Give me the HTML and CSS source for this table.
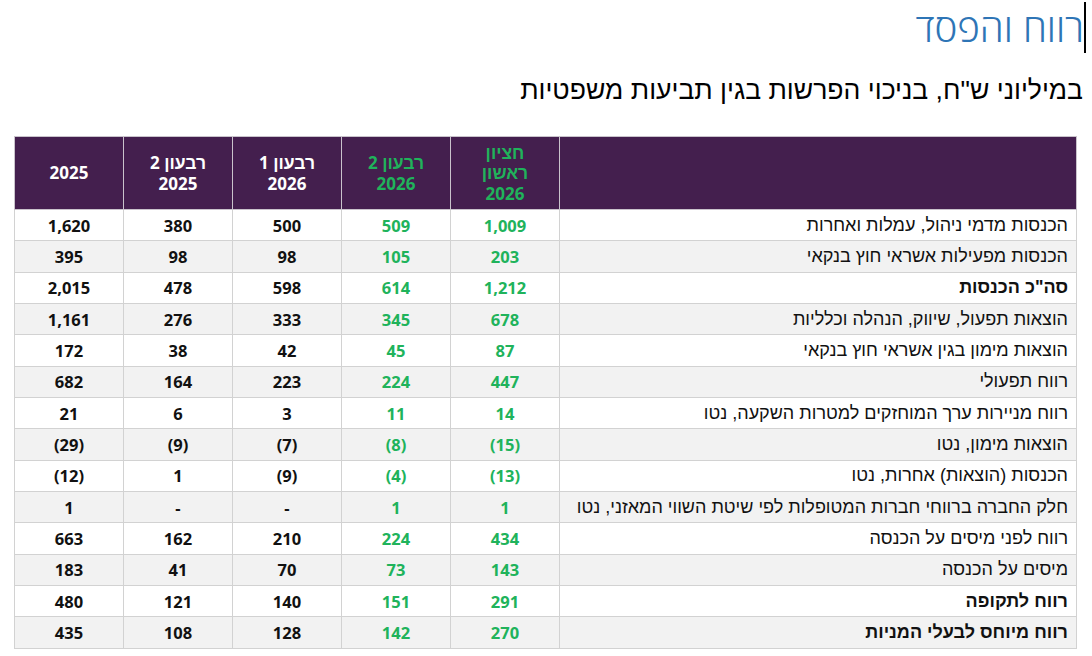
FILE: index.html
```html
<!DOCTYPE html>
<html lang="he" dir="rtl">
<head>
<meta charset="utf-8">
<title>רווח והפסד</title>
<link rel="stylesheet" href="styles.css">
</head>
<body>
<div class="page">
  <h1 class="title"><span class="caret"></span>רווח והפסד</h1>
  <p class="subtitle">במיליוני ש"ח, בניכוי הפרשות בגין תביעות משפטיות</p>
  <table class="pl">
    <thead>
      <tr>
        <th class="label-col"></th>
        <th class="green"><span class="he">חציון</span><br><span class="he">ראשון</span><br>2026</th>
        <th class="green"><span class="he">רבעון</span> 2<br>2026</th>
        <th><span class="he">רבעון</span> 1<br>2026</th>
        <th><span class="he">רבעון</span> 2<br>2025</th>
        <th>2025</th>
      </tr>
    </thead>
    <tbody>
      <tr><td class="label">הכנסות מדמי ניהול, עמלות ואחרות</td><td class="green">1,009</td><td class="green">509</td><td>500</td><td>380</td><td>1,620</td></tr>
      <tr><td class="label">הכנסות מפעילות אשראי חוץ בנקאי</td><td class="green">203</td><td class="green">105</td><td>98</td><td>98</td><td>395</td></tr>
      <tr><td class="label strong">סה"כ הכנסות</td><td class="green">1,212</td><td class="green">614</td><td>598</td><td>478</td><td>2,015</td></tr>
      <tr><td class="label">הוצאות תפעול, שיווק, הנהלה וכלליות</td><td class="green">678</td><td class="green">345</td><td>333</td><td>276</td><td>1,161</td></tr>
      <tr><td class="label">הוצאות מימון בגין אשראי חוץ בנקאי</td><td class="green">87</td><td class="green">45</td><td>42</td><td>38</td><td>172</td></tr>
      <tr><td class="label">רווח תפעולי</td><td class="green">447</td><td class="green">224</td><td>223</td><td>164</td><td>682</td></tr>
      <tr><td class="label">רווח מניירות ערך המוחזקים למטרות השקעה, נטו</td><td class="green">14</td><td class="green">11</td><td>3</td><td>6</td><td>21</td></tr>
      <tr><td class="label">הוצאות מימון, נטו</td><td class="green">(15)</td><td class="green">(8)</td><td>(7)</td><td>(9)</td><td>(29)</td></tr>
      <tr><td class="label">הכנסות (הוצאות) אחרות, נטו</td><td class="green">(13)</td><td class="green">(4)</td><td>(9)</td><td>1</td><td>(12)</td></tr>
      <tr><td class="label">חלק החברה ברווחי חברות המטופלות לפי שיטת השווי המאזני, נטו</td><td class="green">1</td><td class="green">1</td><td>-</td><td>-</td><td>1</td></tr>
      <tr><td class="label">רווח לפני מיסים על הכנסה</td><td class="green">434</td><td class="green">224</td><td>210</td><td>162</td><td>663</td></tr>
      <tr><td class="label">מיסים על הכנסה</td><td class="green">143</td><td class="green">73</td><td>70</td><td>41</td><td>183</td></tr>
      <tr><td class="label strong">רווח לתקופה</td><td class="green">291</td><td class="green">151</td><td>140</td><td>121</td><td>480</td></tr>
      <tr><td class="label strong">רווח מיוחס לבעלי המניות</td><td class="green">270</td><td class="green">142</td><td>128</td><td>108</td><td>435</td></tr>
    </tbody>
  </table>
</div>
</body>
</html>
```
FILE: styles.css
```css
html, body {
  margin: 0;
  padding: 0;
  background: #ffffff;
}

body {
  direction: rtl;
  font-family: "Liberation Sans", Arial, sans-serif;
  color: #000;
}

.page {
  padding: 2px 15px 0 14px;
}

.title {
  margin: 0 -9px 0 0;
  font-family: "Open Sans", "Liberation Sans", sans-serif;
  font-weight: 300;
  font-size: 38.5px;
  line-height: 51px;
  height: 51px;
  color: #2e75b6;
  display: flex;
  align-items: center;
}

.caret {
  display: block;
  width: 2px;
  height: 51px;
  background: #000;
}

.subtitle {
  margin: 22px -6px 0 0;
  font-size: 26.6px;
  line-height: 30px;
  color: #000;
}

.pl {
  margin-top: 31px;
  width: 1063px;
  border-collapse: collapse;
  table-layout: fixed;
  border: 1px solid #d4d4d4;
}

.pl th {
  background: #441f4e;
  color: #ffffff;
  font-family: "Open Sans", "Liberation Sans", sans-serif;
  font-weight: 700;
  font-size: 17px;
  line-height: 19.5px;
  height: 72px;
  padding: 0;
  text-align: center;
  vertical-align: middle;
  border: 1px solid #c9c3cb;
  width: 108px;
}

.pl th .he {
  font-family: "Liberation Sans", Arial, sans-serif;
  font-size: 17.5px;
}

.pl th.label-col {
  width: auto;
}

.pl th.green {
  color: #20b35b;
}

.pl td {
  height: 30.35px;
  padding: 0;
  border: 1px solid #d2d2d2;
  text-align: center;
  vertical-align: middle;
  font-family: "Open Sans", "Liberation Sans", sans-serif;
  font-weight: 700;
  font-size: 16.5px;
  color: #111;
}

.pl td.green {
  color: #20b35b;
}

.pl td.label {
  text-align: right;
  padding-right: 8px;
  font-family: "Liberation Sans", Arial, sans-serif;
  font-weight: 400;
  font-size: 18px;
  color: #111;
}

.pl td.label.strong {
  font-weight: 700;
}

.pl tbody tr:nth-child(even) td {
  background: #f2f2f2;
}

.pl tbody tr:nth-child(odd) td {
  background: #ffffff;
}
```
